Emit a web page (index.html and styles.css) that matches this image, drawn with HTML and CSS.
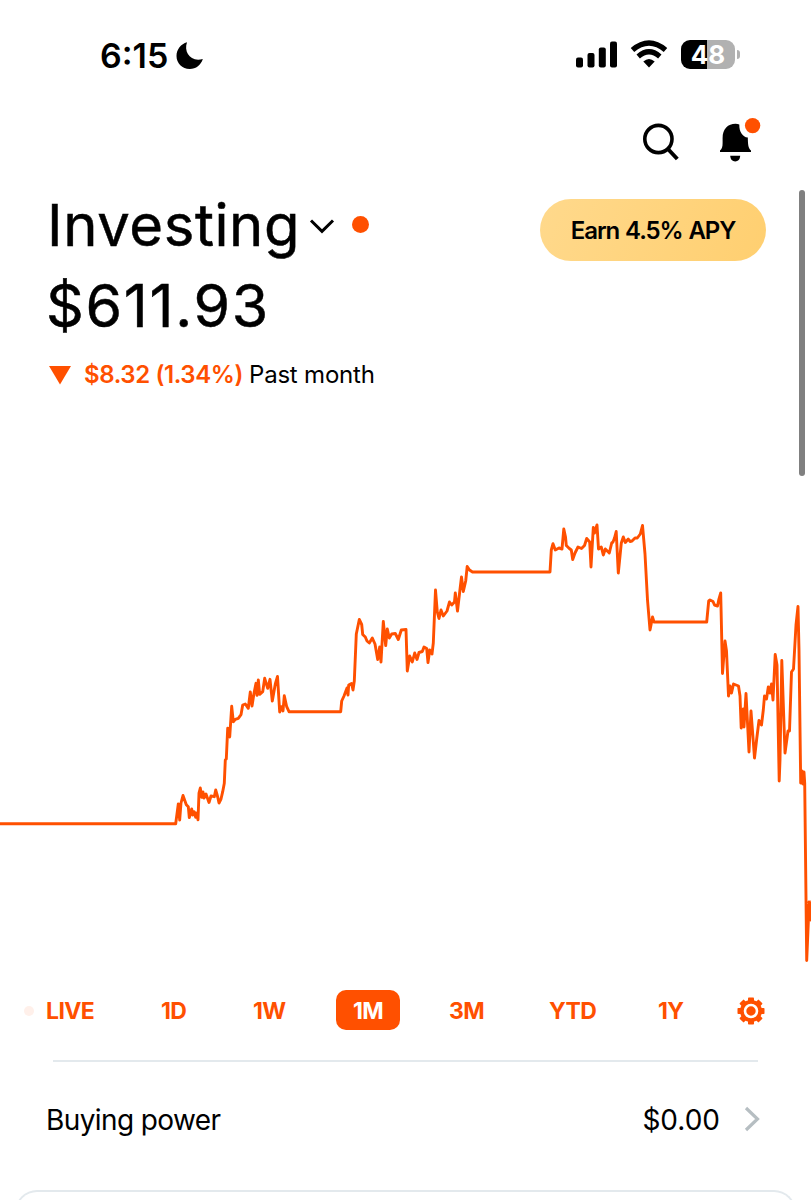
FILE: index.html
```html
<!DOCTYPE html>
<html lang="en">
<head>
<meta charset="utf-8">
<title>Investing</title>
<link rel="stylesheet" href="styles.css">
</head>
<body>
<div class="screen">
  <div class="status">
    <span class="time">6:15</span>
    <svg class="moon" width="28" height="28" viewBox="0 0 28 28"><path d="M11 0.300C7.500 10 14.500 20.500 26.800 17C25 23 20 27 13.800 27C6.200 27 0.500 21.300 0.500 14C0.500 7.500 5 2 11 0.300Z"/></svg>
    <svg class="signal" width="42" height="27" viewBox="0 0 42 27"><rect x="0" y="16.500" width="7" height="10" rx="2"/><rect x="11.500" y="12" width="7" height="14.500" rx="2"/><rect x="22.800" y="6.500" width="7" height="20" rx="2"/><rect x="34" y="0.500" width="7" height="26" rx="2"/></svg>
    <svg class="wifi" width="38" height="28" viewBox="0 0 38 28"><path d="M2.500 10Q19-4 35.500 10" fill="none" stroke="#000" stroke-width="5.400"/><path d="M8.200 16.400Q19 7.200 29.800 16.400" fill="none" stroke="#000" stroke-width="5.200"/><path d="M13.300 21.600Q19 16.500 24.700 21.600L19 27.400Z"/></svg>
    <div class="battery"><span>48</span></div>
    <div class="battery-tip"></div>
  </div>

  <div class="actions">
    <svg width="40" height="40" viewBox="0 0 40 40"><circle cx="17.400" cy="16" r="13.600" fill="none" stroke="#000" stroke-width="3.600"/><path d="M26.500 25.500L36.300 36" stroke="#000" stroke-width="4"/></svg>
    <svg width="42" height="46" viewBox="0 0 42 46"><path d="M1 36V34.500C3 33 3.600 30.500 3.600 27V22C3.600 13 9 7.800 16.500 7.800C18 7.800 19.200 8 20.300 8.400C20.200 16 23.500 20.600 28.800 21.600C29 28 29 32 32 34.500V36Z"/><path d="M11.200 39.800H21.200C21 43.600 19 45.400 16.200 45.400C13.400 45.400 11.400 43.600 11.200 39.800Z"/><circle cx="33.600" cy="9.600" r="7.700" fill="#ff5000"/></svg>
  </div>

  <header class="header">
    <div class="summary">
      <div class="title-row">
        <h1 class="title">Investing</h1>
        <svg class="caret" width="26" height="18" viewBox="0 0 26 18"><path d="M2 2.500L13 13.300L24 2.500" fill="none" stroke="#000" stroke-width="3"/></svg>
        <span class="dot"></span>
      </div>
      <div class="amount">$611.93</div>
      <div class="change">
        <svg class="down" width="22" height="19" viewBox="0 0 22 19"><path d="M0 0H22L11 18.500Z" fill="#ff5000"/></svg>
        <span class="loss">$8.32 (1.34%)</span>
        <span class="period">Past month</span>
      </div>
    </div>
    <div class="earn"><span>Earn 4.5% APY</span></div>
    <div class="scrollbar"></div>
  </header>

  <svg class="chart" width="811" height="500" viewBox="0 480 811 500">
    <polyline points="-3,823.700 175.700,823.700 178.300,804 179.700,820 181,803 183,795.500 186.300,804.700 188.300,806.700 189.300,817.500 191.700,809 192.700,815 194.300,811.700 195.700,817.300 197,813 198,819.700 199,793 200.300,788 201.700,797.300 203,792 204,798 206,794 209,802.500 211,796 214.300,796.700 215.700,790 217.700,797 219,803 221,799 222.700,791.700 224.300,783.300 225.300,760 226.300,759 227.700,728.300 229.700,737 231.700,706.300 233.300,721.700 235.300,719.300 238.300,718.300 241,714.700 242.700,705 245.300,704 248.300,708.300 250.300,692 252,706 254,693.300 256,683.300 257,695.300 258.300,680 259.700,694.300 262.700,691.700 264.700,678.300 267.700,688.300 270,679.300 272.300,701 275.300,684 277.500,676.500 279.700,712 281.300,706.700 283,711 284.300,695.700 286.700,706.700 289,711.700 340.700,711.700
    341.700,701 344,696 347,688 348,695 348.700,685 351.500,683.500 353,690 354.300,681 356.300,634 359.300,619.500 361.700,624.500 362.700,634.500 365.300,637 367,641 369.300,643 372.300,638 375,644 377.700,659.500 379.700,647 381,662 383.300,621.500 385.700,645.500 387.300,629 389.300,638 391.700,634 395.300,633.500 398.300,639.500 401.300,630 406,629.500 407.300,671 409.700,656 412.300,662 414.700,653 417,659.500 419,652.500 422.300,651.500 424,647 426.700,648.500 428,662.500 429.700,650 432,654 433.300,643 435.500,590 437.300,612 439,618.500 441,610 443.300,616 447,611 449.500,602 451.700,605 454.500,602 455.300,593 457.500,611 459.700,592 461.500,577 463.300,591.500 465.700,581 467.200,566.500 469.500,570 472.500,572 550,572
    551.300,550 553,543.700 555.300,550 559,548 562,549 563.800,529 565.500,537 566.300,545.500 569.300,548.500 571.300,550 572.700,559.500 575,553 578,547 581.500,548.500 584.500,545.500 586.700,538.500 589.700,542 591,567 593.300,527.500 594.500,533 597,525 598.500,549 601.300,547 603.300,555 605.300,549 609.300,553 611.700,543 613,542 614.500,538 616.200,531.500 618.300,573 621.300,543 623.300,537 625.300,542.500 628.300,539 630,541.500 632,541 635,538 637.300,538 640.300,534 642.500,525.500 645,554 647.500,600 650,630 651,625 652.500,617 654,622 706.700,622
    708.700,601 710,600 713,601.500 714.500,605 717.500,606 718.700,600 720.700,593 722.500,673.500 725,641 726.500,651 728.500,696 730,686 731.500,693 733.500,684 738.500,686 740,696 741.200,728 743.300,709 744,727 746,693.500 749,752 751,711 754.500,758 756.700,739 759,720.500 761.500,725 763.300,710 764.500,696 766.500,699 768.300,687 770,693 771.500,684 773,700 775.200,654.500 777,665 779.200,781 780,760 781.800,660.500 785,753 788,731 789.500,731 791.500,672 793.500,669 796,625 798,606.500 799,650 800.700,783 802,771 803,784 804,772 804.700,783 806.700,960.500 808.500,918 809,902 811,920 812,901"/>
  </svg>

  <nav class="ranges">
    <span class="live-dot"></span>
    <span class="range live">LIVE</span>
    <span class="range day">1D</span>
    <span class="range week">1W</span>
    <span class="range month">1M</span>
    <span class="range quarter">3M</span>
    <span class="range ytd">YTD</span>
    <span class="range year">1Y</span>
    <svg class="gear" width="28" height="28" viewBox="-14 -14 28 28"><g fill="#ff5000"><rect x="-3" y="-13.500" width="6" height="27" rx="0.800"/><rect x="-3" y="-13.500" width="6" height="27" rx="0.800" transform="rotate(45)"/><rect x="-3" y="-13.500" width="6" height="27" rx="0.800" transform="rotate(90)"/><rect x="-3" y="-13.500" width="6" height="27" rx="0.800" transform="rotate(135)"/><circle r="11"/></g><circle r="6" fill="#ff5000" stroke="#fff" stroke-width="2.600"/></svg>
  </nav>

  <div class="divider"></div>

  <div class="buying">
    <span class="label">Buying power</span>
    <span class="value">$0.00</span>
    <svg width="17" height="26" viewBox="0 0 17 26"><path d="M3 2L14.500 13L3 24" fill="none" stroke="#b6bec2" stroke-width="3.200"/></svg>
  </div>
  <div class="card"></div>
</div>
</body>
</html>
```
FILE: styles.css
```css
* { box-sizing: border-box; }
body { margin: 0; background: #fff; font-family: Inter, "Liberation Sans", sans-serif; color: #000; }
.screen { width: 811px; height: 1200px; overflow: hidden; background: #fff; }
svg { display: block; flex: none; }
span, .amount, .title { white-space: nowrap; }

.status { height: 110px; padding: 40px 0 0 100px; display: flex; align-items: flex-start; }
.time { width: 76px; font-size: 34px; line-height: 32px; font-weight: 600; }
.moon { margin-top: 2px; }
.signal { margin: 1px 0 0 372px; }
.wifi { margin: 0 0 0 12px; }
.battery { width: 54px; height: 29px; margin-left: 13px; border-radius: 9px; background: linear-gradient(90deg, #000 0 26px, #b1b1b1 26px); color: #fff; font-size: 26px; line-height: 30px; font-weight: 700; text-align: center; }
.battery-tip { width: 3px; height: 9px; margin: 10px 0 0 2px; border-radius: 0 5px 5px 0; background: #b1b1b1; }

.actions { height: 80px; padding: 6px 0 0 641px; display: flex; gap: 38px; }
.actions svg:first-child { margin-top: 7px; }

.header { height: 290px; display: flex; align-items: flex-start; padding-left: 48px; }
.summary { width: 492px; }
.title-row { height: 76px; display: flex; align-items: flex-start; }
.title { width: 251px; margin: 0 0 0 -1px; font-size: 58px; line-height: 70px; font-weight: 400; letter-spacing: 0.6px; -webkit-text-stroke: 0.5px #000; }
.caret { margin: 28px 0 0 11px; }
.dot { width: 17px; height: 17px; margin: 26px 0 0 17px; border-radius: 50%; background: #ff5000; }
.amount { height: 80px; margin-left: -2px; font-size: 59px; line-height: 79px; letter-spacing: 1.7px; -webkit-text-stroke: 0.5px #000; }
.change { height: 58px; display: flex; align-items: center; font-size: 24px; line-height: 58px; }
.down { margin-left: 1px; }
.loss { width: 165px; margin-left: 13px; font-weight: 600; letter-spacing: -0.4px; color: #ff5000; }
.period { letter-spacing: -0.2px; }
.earn { width: 226px; height: 62px; margin-top: 9px; display: flex; align-items: center; justify-content: center; border-radius: 31px; background: linear-gradient(115deg, #ffd98c, #ffcf70); font-size: 24px; font-weight: 600; letter-spacing: -1.1px; word-spacing: 1px; }
.scrollbar { width: 6px; height: 286px; margin-left: 33px; border-radius: 3px; background: #808080; }

.chart polyline { fill: none; stroke: #ff5000; stroke-width: 2.900; stroke-linejoin: round; stroke-linecap: round; }

.ranges { height: 60px; padding: 10px 0 0 24px; display: flex; align-items: flex-start; color: #ff5000; font-size: 23px; font-weight: 700; line-height: 42px; letter-spacing: -0.6px; }
.live-dot { width: 10px; height: 10px; margin: 16px 12px 0 0; border-radius: 50%; background: #fff0ea; }
.live { width: 115px; }
.day { width: 92px; }
.week { width: 83px; }
.month { width: 64px; height: 40px; margin-right: 49px; border-radius: 10px; background: #ff5000; color: #fff; text-align: center; }
.quarter { width: 100px; }
.ytd { width: 109px; }
.year { width: 79px; }
.gear { margin-top: 7px; }

.divider { height: 2px; margin: 20px 53px 0; background: #e3e9ed; }
.buying { height: 128px; padding: 44px 51px 0 46px; display: flex; align-items: flex-start; font-size: 28px; line-height: 28px; }
.label { letter-spacing: -0.6px; }
.value { margin-left: auto; margin-right: 23px; }
.card { height: 40px; margin: 0 15px; border: 2px solid #e3e9ed; border-radius: 22px 22px 0 0; border-bottom: 0; }
```
